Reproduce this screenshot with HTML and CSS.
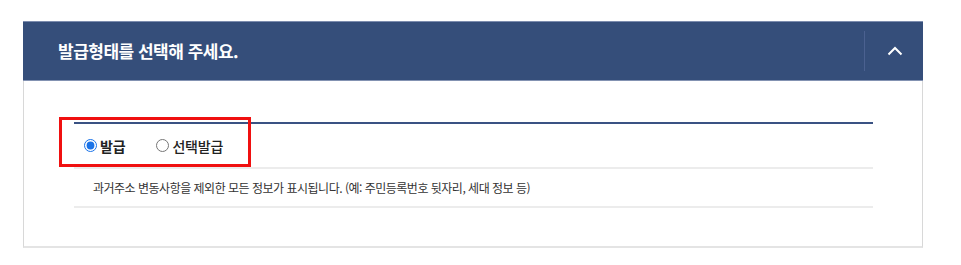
FILE: index.html
```html
<!DOCTYPE html>
<html lang="ko">
<head>
<meta charset="utf-8">
<title>발급형태</title>
<link rel="stylesheet" href="styles.css">
</head>
<body>
<div class="wrap">
  <section class="panel">
    <header class="panel-head">
      <h2 class="panel-title">발급형태를 선택해 주세요.</h2>
      <button class="toggle" type="button" aria-label="접기">
        <svg width="16" height="10" viewBox="0 0 16 10"><path d="M1.5 8.5 L8 2 L14.5 8.5" fill="none" stroke="#ffffff" stroke-width="2"/></svg>
      </button>
    </header>
    <div class="panel-body">
      <div class="options">
        <label class="opt checked"><input type="radio" name="kind" checked><span>발급</span></label>
        <label class="opt"><input type="radio" name="kind"><span>선택발급</span></label>
      </div>
      <p class="desc">과거주소 변동사항을 제외한 모든 정보가 표시됩니다. (예: 주민등록번호 뒷자리, 세대 정보 등)</p>
      <div class="highlight"></div>
    </div>
  </section>
</div>
</body>
</html>
```
FILE: styles.css
```css
html, body {
  margin: 0;
  padding: 0;
  background: #ffffff;
}
body {
  font-family: "Noto Sans CJK KR", "Noto Sans", sans-serif;
  color: #222;
}
.wrap {
  padding: 21px 0 0 23px;
}
.panel {
  width: 900px;
}
.panel-head {
  box-sizing: border-box;
  height: 60px;
  background: #354e7a;
  border-top: 1px solid #7c8cae;
  border-bottom: 1px solid #8392b2;
  display: flex;
  align-items: center;
  justify-content: space-between;
}
.panel-title {
  margin: 0 0 0 35px;
  color: #ffffff;
  font-size: 17px;
  font-weight: 700;
  letter-spacing: -0.5px;
  line-height: 1;
  padding-bottom: 2px;
}
.toggle {
  box-sizing: border-box;
  width: 59px;
  height: 40px;
  margin: 0;
  padding: 0;
  background: transparent;
  border: 0;
  border-left: 1px solid #4b6190;
  display: flex;
  align-items: center;
  justify-content: center;
}
.toggle svg {
  display: block;
  margin-left: 2px;
}
.panel-body {
  position: relative;
  box-sizing: border-box;
  border: 1px solid #d8d8d8;
  border-top: 0;
  border-bottom: 2px solid #e4e4e4;
  padding: 41px 49px 38px 50px;
}
.options {
  box-sizing: border-box;
  height: 47px;
  border-top: 2px solid #3a5283;
  border-bottom: 2px solid #ececec;
  display: flex;
  align-items: center;
  padding: 0 0 0 10px;
  gap: 31px;
}
.opt {
  display: flex;
  align-items: center;
  font-size: 14px;
  letter-spacing: -0.2px;
  color: #222;
  font-weight: 500;
}
.opt.checked {
  font-weight: 700;
}
.opt input {
  width: 13px;
  height: 13px;
  margin: 0 3px 0 0;
  accent-color: #1a73e8;
}
.desc {
  margin: 0;
  height: 39px;
  box-sizing: border-box;
  border-bottom: 2px solid #ececec;
  padding: 0 0 1px 19px;
  display: flex;
  align-items: center;
  font-size: 12px;
  letter-spacing: -0.5px;
  color: #333;
}
.highlight {
  position: absolute;
  left: 35px;
  top: 36px;
  width: 192px;
  height: 50px;
  box-sizing: border-box;
  border: 3px solid #f01010;
  pointer-events: none;
}
```
